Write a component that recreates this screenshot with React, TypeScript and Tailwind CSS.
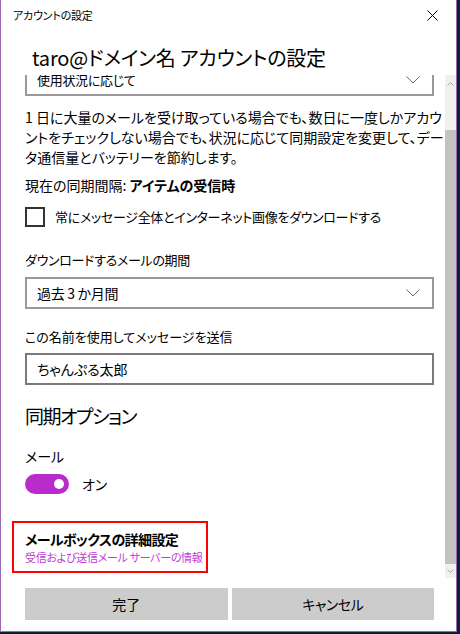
import React from "react";

const Chevron = () => (
  <svg width="14" height="8" viewBox="0 0 14 8" className="shrink-0">
    <polyline points="0.5,0.5 7,7 13.5,0.5" fill="none" stroke="#6b6b6b" strokeWidth="1" />
  </svg>
);

export default function App() {
  return (
    <div
      className="w-[460px] h-[634px] bg-[#0f1d3a] overflow-hidden [font-feature-settings:'palt']"
      style={{ fontFamily: '"Noto Sans CJK JP", "Noto Sans", sans-serif' }}
    >
      <div className="w-[457px] h-[632px] bg-white border-l border-r border-b border-[#9a6aae] flex flex-col text-black">
        {/* title bar */}
        <div className="h-[30px] shrink-0 flex items-center justify-between pl-[12px] pr-[18px]">
          <span className="text-[11px] leading-none tracking-[-0.2px]">アカウントの設定</span>
          <svg width="11" height="11" viewBox="0 0 11 11">
            <path d="M0.5 0.5 L10.5 10.5 M10.5 0.5 L0.5 10.5" stroke="#000" strokeWidth="1" />
          </svg>
        </div>
        {/* heading */}
        <div className="h-[45px] shrink-0 pl-[31px] pt-[14px]">
          <h1 className="text-[20px] leading-[28px] whitespace-nowrap tracking-[-0.2px]">taro@ドメイン名 アカウントの設定</h1>
        </div>
        {/* scroll region */}
        <div className="h-[503px] shrink-0 flex">
          <div className="flex-1 overflow-hidden pt-[3px]">
            <div className="-mt-[14px] pl-[24px] pr-[11px] flex flex-col">
              <div className="h-[32px] border-2 border-[#999999] flex items-center justify-between pl-[10px] pr-[12px]">
                <span className="text-[13px] tracking-[-0.3px]">使用状況に応じて</span>
                <Chevron />
              </div>
              <p className="mt-[11px] text-[14px] leading-[20px] whitespace-nowrap">
                1 日に大量のメールを受け取っている場合でも、数日に一度しかアカウ
                <br />
                ントをチェックしない場合でも、状況に応じて同期設定を変更して、デー
                <br />
                タ通信量とバッテリーを節約します。
              </p>
              <p className="mt-[8px] text-[14px] leading-[20px]">
                現在の同期間隔: <span className="font-bold">アイテムの受信時</span>
              </p>
              <div className="mt-[12px] flex items-center gap-[10px]">
                <div className="w-[20px] h-[20px] border-2 border-[#333333]" />
                <span className="text-[13px] leading-[20px] tracking-[-0.3px]">常にメッセージ全体とインターネット画像をダウンロードする</span>
              </div>
              <p className="mt-[23px] text-[13px] leading-[20px] tracking-[-0.3px]">ダウンロードするメールの期間</p>
              <div className="mt-[7px] h-[32px] border-2 border-[#999999] flex items-center justify-between pl-[10px] pr-[12px]">
                <span className="text-[14px] tracking-[-0.3px]">過去 3 か月間</span>
                <Chevron />
              </div>
              <p className="mt-[18px] text-[13px] leading-[20px]">この名前を使用してメッセージを送信</p>
              <div className="mt-[6px] h-[32px] border-2 border-[#7a7a7a] flex items-center pl-[10px]">
                <span className="text-[14px]">ちゃんぷる太郎</span>
              </div>
              <h2 className="mt-[17px] text-[19px] leading-[28px] tracking-[-1.5px]">同期オプション</h2>
              <p className="mt-[16px] text-[14px] leading-[20px]">メール</p>
              <div className="mt-[8px] flex items-center gap-[13px]">
                <div className="w-[44px] h-[20px] rounded-full bg-[#b82ccb] flex items-center justify-end pr-[5px]">
                  <div className="w-[10px] h-[10px] rounded-full bg-white" />
                </div>
                <span className="text-[14px] leading-[20px]">オン</span>
              </div>
              <div className="mt-[27px] -ml-[13px] w-[196px] border-2 border-[#ff0000] pl-[11px] pt-[6px] pb-[6px]">
                <p className="text-[14px] leading-[20px] font-bold whitespace-nowrap tracking-[-0.6px]">メールボックスの詳細設定</p>
                <p className="text-[11px] leading-[16px] text-[#c237d6] whitespace-nowrap tracking-[-0.3px]">受信および送信メール サーバーの情報</p>
              </div>
            </div>
          </div>
          {/* scrollbar */}
          <div className="w-[11px] flex flex-col bg-[#f0f0f0]">
            <div className="h-[17px] flex items-center justify-center">
              <svg width="7" height="4" viewBox="0 0 7 4">
                <polyline points="0.5,3.5 3.5,0.5 6.5,3.5" fill="none" stroke="#a6a6a6" strokeWidth="1" />
              </svg>
            </div>
            <div className="h-[38px]" />
            <div className="flex-1 bg-[#c2c2c2]" />
            <div className="h-[14px] flex items-center justify-center">
              <svg width="7" height="4" viewBox="0 0 7 4">
                <polyline points="0.5,0.5 3.5,3.5 6.5,0.5" fill="none" stroke="#a6a6a6" strokeWidth="1" />
              </svg>
            </div>
          </div>
        </div>
        {/* footer */}
        <div className="flex gap-[4px] pl-[24px] pr-[22px] pt-[10px]">
          <button className="flex-1 h-[32px] bg-[#cccccc] text-[14px]">完了</button>
          <button className="flex-1 h-[32px] bg-[#cccccc] text-[14px] tracking-[-0.5px]">キャンセル</button>
        </div>
      </div>
    </div>
  );
}
